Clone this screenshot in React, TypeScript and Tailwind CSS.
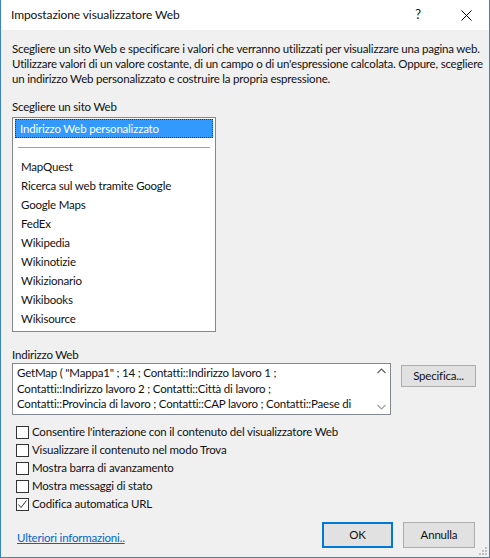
import React from "react";

const items = [
  "MapQuest",
  "Ricerca sul web tramite Google",
  "Google Maps",
  "FedEx",
  "Wikipedia",
  "Wikinotizie",
  "Wikizionario",
  "Wikibooks",
  "Wikisource",
];

const checks: [string, boolean][] = [
  ["Consentire l'interazione con il contenuto del visualizzatore Web", false],
  ["Visualizzare il contenuto nel modo Trova", false],
  ["Mostra barra di avanzamento", false],
  ["Mostra messaggi di stato", false],
  ["Codifica automatica URL", true],
];

function Check({ checked }: { checked: boolean }) {
  return (
    <div className="w-[13px] h-[13px] border border-[#333333] bg-white flex items-center justify-center shrink-0">
      {checked && (
        <svg width="11" height="11" viewBox="0 0 11 11">
          <path d="M1.5 5.5 L4 8.5 L9.5 1.5" fill="none" stroke="#333" strokeWidth="1" />
        </svg>
      )}
    </div>
  );
}

export default function App() {
  return (
    <div
      className="w-[490px] h-[558px] bg-[#f0f0f0] border-x border-b border-[#3c82c8] flex flex-col text-[11.5px] tracking-[-0.2px] text-[#111] relative overflow-hidden whitespace-nowrap"
      style={{ fontFamily: 'Lato, "Noto Sans", sans-serif' }}
    >
      {/* title bar */}
      <div className="h-[30px] bg-white flex items-center shrink-0">
        <span className="pl-[10px] text-[12px] tracking-[-0.1px] flex-1">Impostazione visualizzatore Web</span>
        <span className="w-[46px] text-center text-[13px] mr-[2px]">?</span>
        <div className="w-[46px] h-[30px] flex items-center justify-center">
          <svg width="11" height="11" viewBox="0 0 11 11">
            <path d="M0.5 0.5 L10.5 10.5 M10.5 0.5 L0.5 10.5" stroke="#000" strokeWidth="1" />
          </svg>
        </div>
      </div>

      <div className="flex flex-col px-[11px] pt-[11px] flex-1">
        <div className="leading-[15px]">
          <div>Scegliere un sito Web e specificare i valori che verranno utilizzati per visualizzare una pagina web.</div>
          <div>Utilizzare valori di un valore costante, di un campo o di un'espressione calcolata. Oppure, scegliere</div>
          <div>un indirizzo Web personalizzato e costruire la propria espressione.</div>
        </div>

        <div className="mt-[13px] leading-[15px]">Scegliere un sito Web</div>

        <div className="mt-[3px] w-[204px] h-[215px] border border-[#828790] bg-white p-[1px] flex flex-col">
          <div className="h-[19px] mx-[1px] bg-[#3399ff] text-white border border-dotted border-[#1a3d66] flex items-center pl-[4px]">
            Indirizzo Web personalizzato
          </div>
          <div className="h-[19px] flex items-center px-[4px]">
            <div className="h-px w-full bg-[#a0a0a0]"></div>
          </div>
          {items.map((it) => (
            <div key={it} className="h-[19px] flex items-center pl-[7px]">
              {it}
            </div>
          ))}
        </div>

        <div className="mt-[16px] leading-[14px]">Indirizzo Web</div>

        <div className="flex mt-[1px] items-start">
          <div className="w-[379px] h-[52px] border border-[#828790] bg-white flex">
            <div className="flex-1 pl-[4px] pt-[1px] leading-[15.5px] overflow-hidden">
              <div>GetMap ( "Mappa1" ; 14 ; Contatti::Indirizzo lavoro 1 ;</div>
              <div>Contatti::Indirizzo lavoro 2 ; Contatti::Città di lavoro ;</div>
              <div>Contatti::Provincia di lavoro ; Contatti::CAP lavoro ; Contatti::Paese di</div>
            </div>
            <div className="w-[17px] flex flex-col justify-between items-center py-[4px]">
              <svg width="9" height="6" viewBox="0 0 9 6">
                <path d="M0.5 5 L4.5 1 L8.5 5" fill="none" stroke="#606060" strokeWidth="1.2" />
              </svg>
              <svg width="9" height="6" viewBox="0 0 9 6">
                <path d="M0.5 1 L4.5 5 L8.5 1" fill="none" stroke="#a0a0a0" strokeWidth="1.2" />
              </svg>
            </div>
          </div>
          <div className="ml-[10px] mt-[2px] w-[75px] h-[22px] bg-[#e1e1e1] border border-[#adadad] flex items-center justify-center">
            Specifica...
          </div>
        </div>

        <div className="mt-[8px] flex flex-col pl-[4px]">
          {checks.map(([t, c]) => (
            <div key={t} className="h-[18px] flex items-center gap-[3px]">
              <Check checked={c} />
              <span>{t}</span>
            </div>
          ))}
        </div>

        <div className="mt-[9px] flex items-center">
          <span className="ml-[5px] text-[#0066cc] underline mt-[6px] flex-1">Ulteriori informazioni..</span>
          <div className="w-[71px] h-[26px] bg-[#e1e1e1] border-2 border-[#0078d7] flex items-center justify-center">
            OK
          </div>
          <div className="ml-[10px] w-[72px] h-[26px] bg-[#e1e1e1] border border-[#adadad] flex items-center justify-center mr-[3px]">
            Annulla
          </div>
        </div>
      </div>

      <svg className="absolute right-[1px] bottom-[1px]" width="10" height="10" viewBox="0 0 10 10">
        <rect x="7" y="1" width="2" height="2" fill="#c0c0c0" />
        <rect x="4" y="4" width="2" height="2" fill="#c0c0c0" />
        <rect x="7" y="4" width="2" height="2" fill="#c0c0c0" />
        <rect x="1" y="7" width="2" height="2" fill="#c0c0c0" />
        <rect x="4" y="7" width="2" height="2" fill="#c0c0c0" />
        <rect x="7" y="7" width="2" height="2" fill="#c0c0c0" />
      </svg>
    </div>
  );
}
